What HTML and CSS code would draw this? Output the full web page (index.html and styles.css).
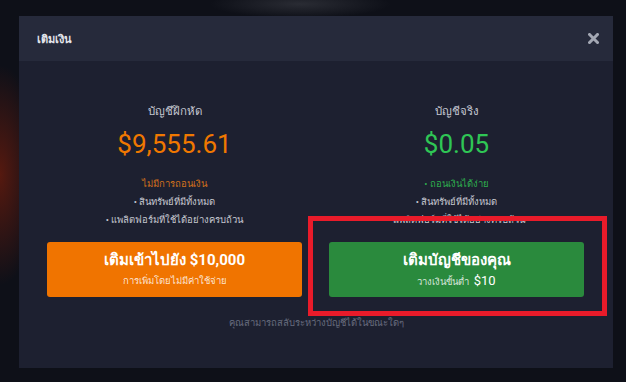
FILE: index.html
```html
<!DOCTYPE html>
<html lang="th">
<head>
<meta charset="utf-8">
<title>เติมเงิน</title>
<link rel="stylesheet" href="styles.css">
</head>
<body>
<div class="backdrop">
  <div class="modal">
    <div class="modal-header">
      <span class="title">เติมเงิน</span>
      <svg class="close" width="11" height="11" viewBox="0 0 11 11"><path d="M1.5 1.5 L9.5 9.5 M9.5 1.5 L1.5 9.5" stroke="#a3a7b3" stroke-width="3" stroke-linecap="square"/></svg>
    </div>
    <div class="modal-body">
      <div class="columns">
        <div class="col">
          <div class="label">บัญชีฝึกหัด</div>
          <div class="amount demo">$9,555.61</div>
          <div class="note demo-note">ไม่มีการถอนเงิน</div>
          <div class="bullet">• สินทรัพย์ที่มีทั้งหมด</div>
          <div class="bullet">• แพลิตฟอร์มที่ใช้ได้อย่างครบถ้วน</div>
          <button class="btn btn-orange">
            <span class="btn-main">เติมเข้าไปยัง $10,000</span>
            <span class="btn-sub">การเพิ่มโดยไม่มีค่าใช้จ่าย</span>
          </button>
        </div>
        <div class="col">
          <div class="label">บัญชีจริง</div>
          <div class="amount real">$0.05</div>
          <div class="note real-note">• ถอนเงินได้ง่าย</div>
          <div class="bullet">• สินทรัพย์ที่มีทั้งหมด</div>
          <div class="bullet">• แพลิตฟอร์มที่ใช้ได้อย่างครบถ้วน</div>
          <button class="btn btn-green">
            <span class="btn-main">เติมบัญชีของคุณ</span>
            <span class="btn-sub">วางเงินขั้นต่ำ <span class="big">$10</span></span>
          </button>
        </div>
      </div>
      <div class="footer">คุณสามารถสลับระหว่างบัญชีได้ในขณะใดๆ</div>
    </div>
  </div>
</div>
<div class="highlight"></div>
</body>
</html>
```
FILE: styles.css
```css
html, body {
  margin: 0;
  padding: 0;
}
body {
  width: 626px;
  height: 382px;
  overflow: hidden;
  position: relative;
  background:
    radial-gradient(ellipse 40px 110px at 0px 175px, rgba(110, 28, 12, 0.75), rgba(110, 28, 12, 0) 100%),
    radial-gradient(ellipse 90px 14px at 300px 4px, rgba(60, 62, 70, 0.6), rgba(60, 62, 70, 0) 100%),
    #0e1018;
  font-family: Roboto, "Noto Sans", "DejaVu Sans", sans-serif;
}
.backdrop {
  padding: 16px 13px 0 19px;
}
.modal {
  width: 594px;
  background: #1d2030;
}
.modal-header {
  height: 45px;
  background: #262a3b;
  display: flex;
  align-items: center;
  justify-content: space-between;
  padding: 0 14px 0 18px;
}
.title {
  color: #e4e6ec;
  font-size: 11px;
  font-weight: 700;
}
.close {
  display: block;
}
.modal-body {
  padding: 42px 27px 0 28px;
  height: 307px;
  box-sizing: border-box;
}
.columns {
  display: grid;
  grid-template-columns: 255px 255px;
  column-gap: 27px;
}
.col {
  display: flex;
  flex-direction: column;
  align-items: center;
  text-align: center;
}
.label {
  color: #c4c7d1;
  font-size: 11.5px;
  line-height: 16px;
}
.amount {
  margin-top: 10px;
  font-size: 26px;
  line-height: 30px;
  font-weight: 400;
}
.demo { color: #f07800; }
.real { color: #2fc655; }
.note {
  margin-top: 16px;
  font-size: 9.5px;
  line-height: 18px;
}
.demo-note { color: #d2711c; }
.real-note { color: #2eae4e; }
.bullet {
  color: #c6c8d1;
  font-size: 9.5px;
  line-height: 18px;
}
.btn {
  margin-top: 13px;
  width: 255px;
  height: 55px;
  border: 0;
  border-radius: 3px;
  display: flex;
  flex-direction: column;
  align-items: center;
  justify-content: center;
  font-family: inherit;
  color: #ffffff;
  padding: 0;
}
.btn-orange { background: #f07400; }
.btn-green { background: #2a8a3d; }
.btn-main {
  font-size: 15px;
  font-weight: 700;
  line-height: 20px;
}
.btn-sub {
  font-size: 9.5px;
  line-height: 17px;
  margin-top: 2px;
  color: rgba(255, 255, 255, 0.82);
}
.btn-sub .big {
  font-size: 13px;
  color: #ffffff;
  margin-left: 2px;
}
.footer {
  margin-top: 18px;
  text-align: center;
  color: #676c7e;
  font-size: 9.5px;
  line-height: 16px;
}
.highlight {
  position: absolute;
  left: 308px;
  top: 216px;
  width: 299px;
  height: 100px;
  box-sizing: border-box;
  border: 5px solid #e91b2a;
}
```
